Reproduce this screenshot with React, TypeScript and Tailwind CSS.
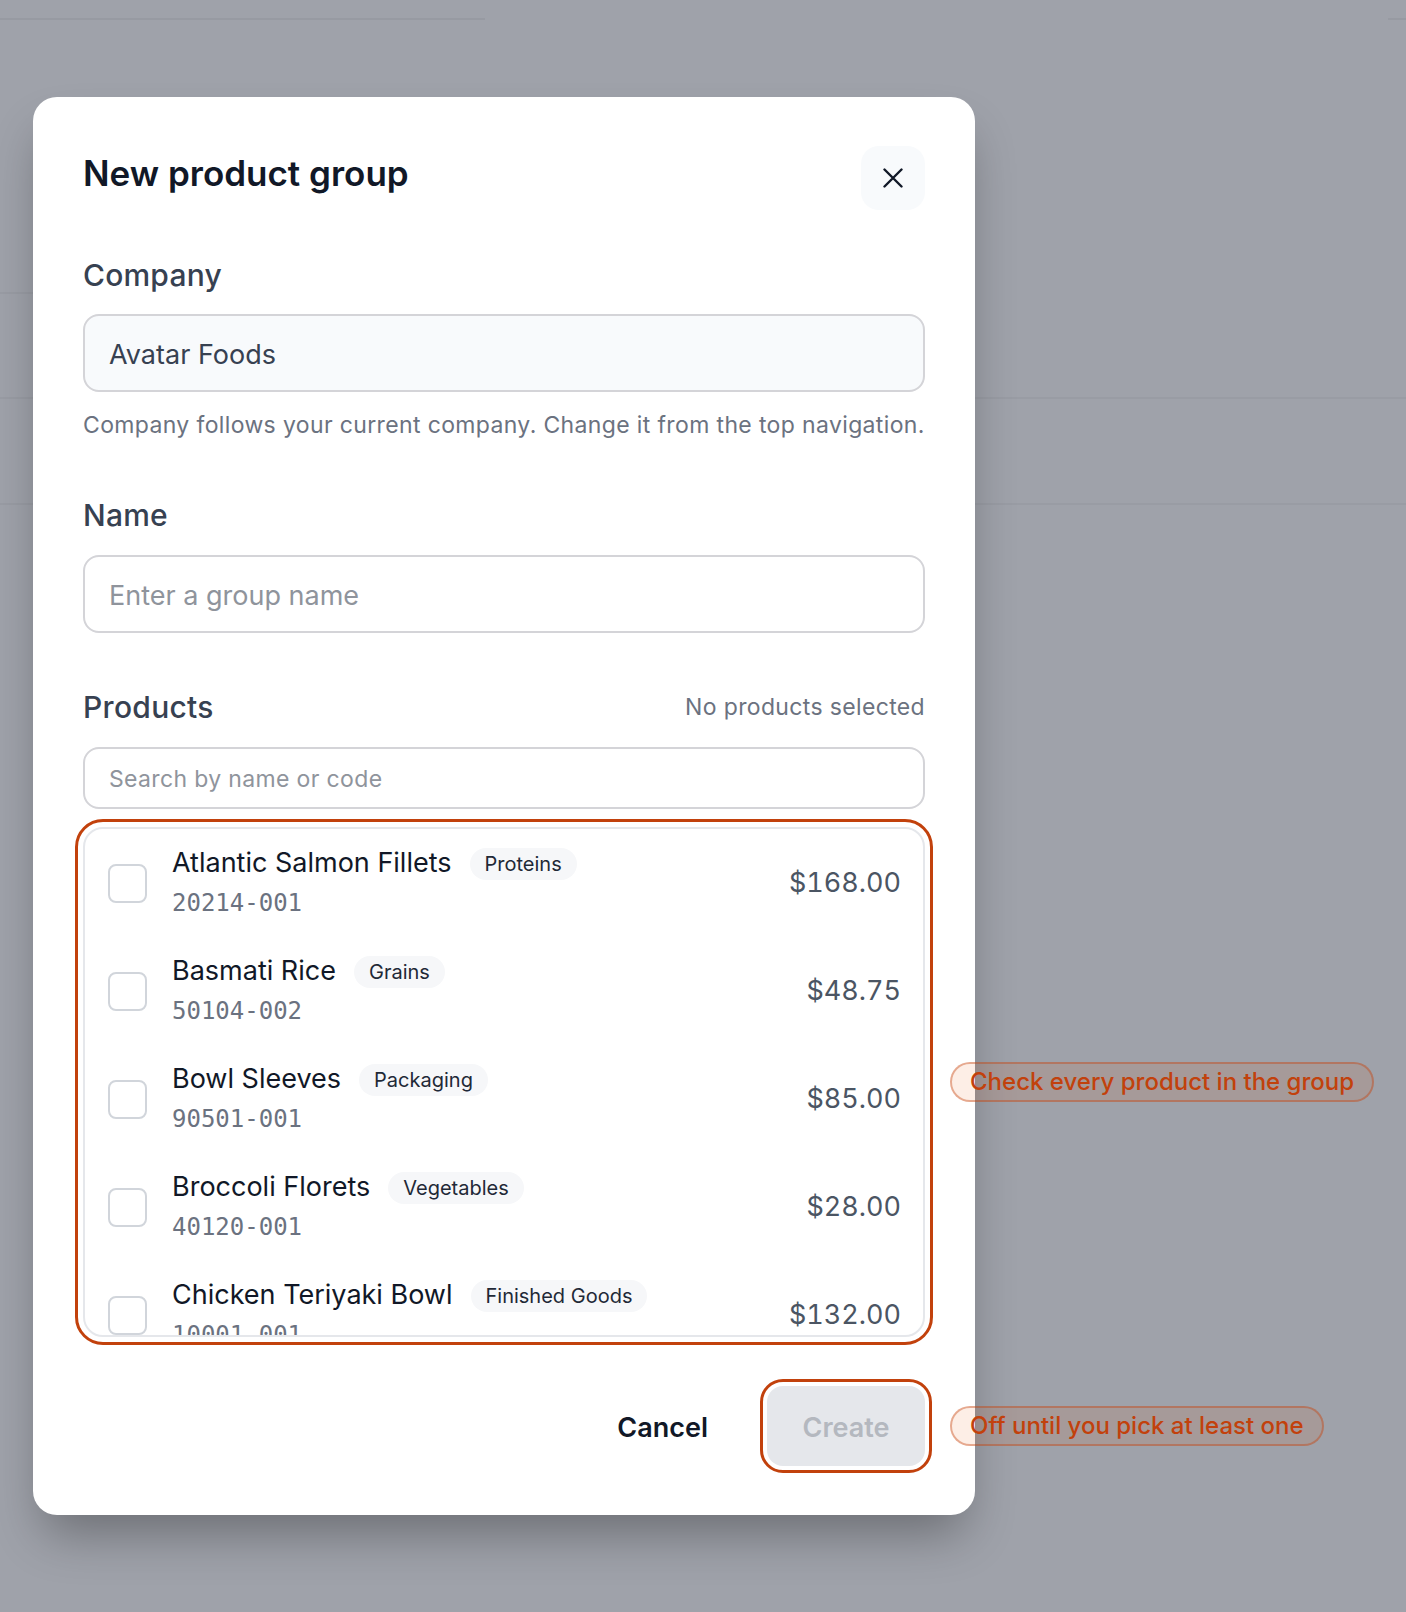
import { useState } from 'react';

type Product = {
  name: string;
  category: string;
  code: string;
  price: string;
};

const products: Product[] = [
  { name: 'Atlantic Salmon Fillets', category: 'Proteins', code: '20214-001', price: '$168.00' },
  { name: 'Basmati Rice', category: 'Grains', code: '50104-002', price: '$48.75' },
  { name: 'Bowl Sleeves', category: 'Packaging', code: '90501-001', price: '$85.00' },
  { name: 'Broccoli Florets', category: 'Vegetables', code: '40120-001', price: '$28.00' },
  { name: 'Chicken Teriyaki Bowl', category: 'Finished Goods', code: '10001-001', price: '$132.00' },
];

function Callout({ children }: { children: string }) {
  return (
    <div className="absolute left-[calc(100%+25px)] top-1/2 -translate-y-1/2 z-10 flex h-[40px] items-center whitespace-nowrap rounded-full border-2 border-[#c2410c]/40 bg-[#ea580c]/10 px-[18px] text-[24px] font-medium text-[#c2410c]">
      {children}
    </div>
  );
}

export default function App() {
  const [checked, setChecked] = useState<string[]>([]);
  const [name, setName] = useState('');
  const [query, setQuery] = useState('');

  const toggle = (code: string) =>
    setChecked((prev) => (prev.includes(code) ? prev.filter((c) => c !== code) : [...prev, code]));

  return (
    <div className="relative min-h-[1612px] w-full overflow-hidden bg-[#9fa2aa] font-['Inter',sans-serif]">
      {/* Page behind the dialog */}
      <div className="pt-[18px]">
        <div className="flex">
          <div className="w-[485px] border-t-2 border-[#979aa2]" />
          <div className="flex-1" />
          <div className="w-[18px] border-t-2 border-[#979aa2]" />
        </div>
        <div className="mt-[272px] w-[60px] border-t-2 border-[#999ca4]" />
        <div className="h-[105px] border-b-2 border-[#999ca4]" />
        <div className="h-[106px] border-b-2 border-[#999ca4]" />
      </div>

      {/* Dialog */}
      <div className="absolute inset-0 pl-[33px] pt-[97px]">
        <div className="w-[942px] rounded-[24px] bg-white px-[50px] py-[49px] shadow-[0_28px_50px_-10px_rgba(0,0,0,0.32)]">
          {/* Header */}
          <div className="flex h-[64px] items-start justify-between">
            <h2 className="pt-[7px] text-[35px] font-semibold leading-[40px] text-[#111827]">
              New product group
            </h2>
            <button className="flex h-[64px] w-[64px] items-center justify-center rounded-[18px] bg-[#f8fafc]">
              <svg width="20" height="20" viewBox="0 0 20 20" fill="none">
                <path d="M1.5 1.5l17 17M18.5 1.5l-17 17" stroke="#111827" strokeWidth="2.4" strokeLinecap="round" />
              </svg>
            </button>
          </div>

          {/* Company */}
          <div className="mt-[47px] text-[30px] font-medium leading-[36px] tracking-[0.2px] text-[#374151]">Company</div>
          <div className="mt-[21px] flex h-[78px] items-center rounded-[16px] border-2 border-[#d4d4d8] bg-[#f8fafc] px-[24px] pt-[4px] text-[27px] text-[#374151]">
            Avatar Foods
          </div>
          <p className="mt-[17px] whitespace-nowrap text-[23px] leading-[32px] tracking-[0.36px] text-[#6b7280]">
            Company follows your current company. Change it from the top navigation.
          </p>

          {/* Name */}
          <div className="mt-[56px] text-[30px] font-medium leading-[36px] tracking-[0.2px] text-[#374151]">Name</div>
          <input
            value={name}
            onChange={(e) => setName(e.target.value)}
            placeholder="Enter a group name"
            className="mt-[22px] block h-[78px] w-full rounded-[16px] border-2 border-[#d4d4d8] bg-white px-[24px] pt-[3px] text-[27px] text-[#374151] outline-none placeholder:text-[#8f949c]"
          />

          {/* Products */}
          <div className="mt-[56px] flex h-[36px] items-center justify-between">
            <span className="text-[30px] font-medium leading-[36px] tracking-[0.3px] text-[#374151]">Products</span>
            <span className="text-[23px] tracking-[0.35px] text-[#6b7280]">
              {checked.length === 0 ? 'No products selected' : `${checked.length} selected`}
            </span>
          </div>
          <input
            value={query}
            onChange={(e) => setQuery(e.target.value)}
            placeholder="Search by name or code"
            className="mt-[22px] block h-[62px] w-full rounded-[16px] border-2 border-[#d4d4d8] bg-white px-[24px] pt-[2px] text-[23px] tracking-[0.35px] text-[#374151] outline-none placeholder:text-[#8f949c]"
          />

          <div className="relative mt-[18px]">
            <div className="h-[510px] overflow-hidden rounded-[20px] border-2 border-[#e5e7eb] outline-3 outline-offset-[5px] outline-[#c2410c]">
              {products.map((p) => (
                <div key={p.code} className="flex h-[108px] items-center pl-[23px] pr-[22px]">
                  <button
                    onClick={() => toggle(p.code)}
                    className={`h-[39px] w-[39px] shrink-0 rounded-[8px] border-2 ${
                      checked.includes(p.code) ? 'border-[#111827] bg-[#111827]' : 'border-[#d1d5db] bg-white'
                    }`}
                  />
                  <div className="ml-[25px] flex flex-1 flex-col">
                    <div className="flex h-[36px] items-center gap-[18px]">
                      <span className="text-[27px] text-[#111827]">{p.name}</span>
                      <span className="flex h-[32px] items-center rounded-full bg-[#f6f7f9] px-[15px] text-[20px] text-[#1f2937]">
                        {p.category}
                      </span>
                    </div>
                    <div className="mt-[3px] font-['DejaVu_Sans_Mono',monospace] text-[24px] leading-[36px] text-[#6b7280]">
                      {p.code}
                    </div>
                  </div>
                  <span className="text-[27px] tabular-nums text-[#4b5563]">{p.price}</span>
                </div>
              ))}
            </div>
            <Callout>Check every product in the group</Callout>
          </div>

          {/* Footer */}
          <div className="mt-[49px] flex items-center justify-end gap-[59px]">
            <button className="pt-[5px] text-[27px] font-semibold text-[#111827]">Cancel</button>
            <div className="relative">
              <button
                disabled={checked.length === 0}
                className="h-[80px] w-[158px] rounded-[16px] bg-[#e5e7eb] pt-[5px] text-[27px] font-semibold text-[#b4b8bf] outline-3 outline-offset-[4px] outline-[#c2410c]"
              >
                Create
              </button>
              <Callout>Off until you pick at least one</Callout>
            </div>
          </div>
        </div>
      </div>
    </div>
  );
}
